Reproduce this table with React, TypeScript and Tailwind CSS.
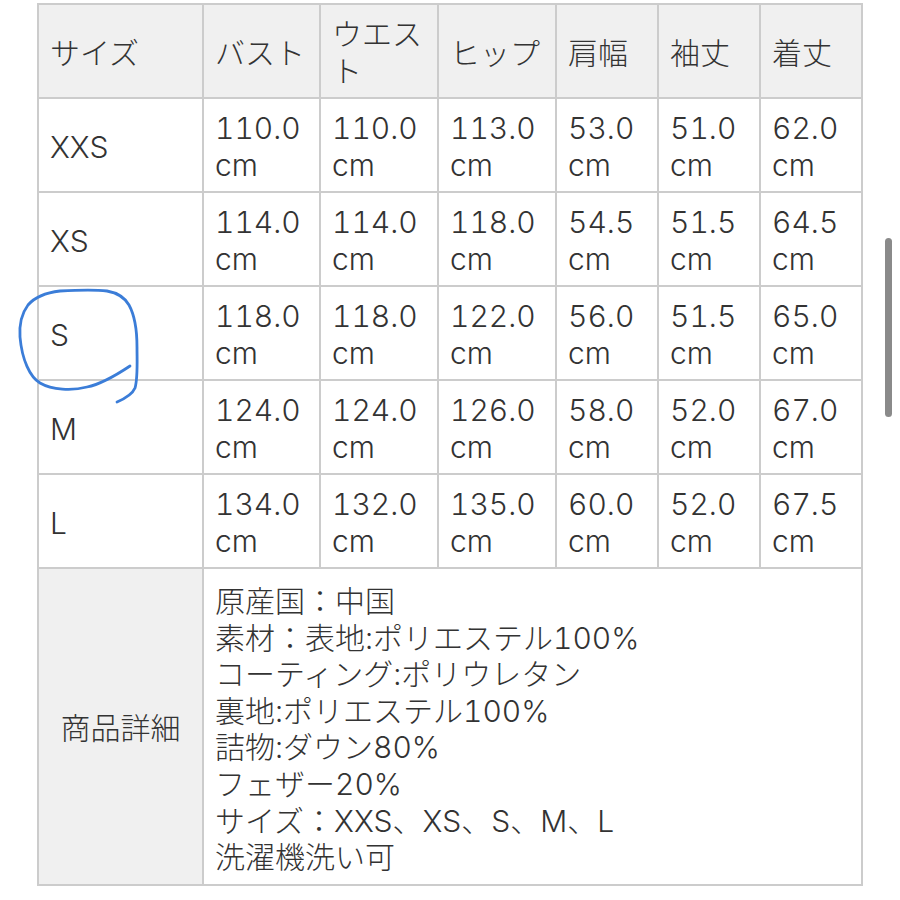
// Size chart table with product details, a hand-drawn circle over "S"

const headers = ["サイズ", "バスト", "ウエスト", "ヒップ", "肩幅", "袖丈", "着丈"];

const rows: [string, string[]][] = [
  ["XXS", ["110.0", "110.0", "113.0", "53.0", "51.0", "62.0"]],
  ["XS", ["114.0", "114.0", "118.0", "54.5", "51.5", "64.5"]],
  ["S", ["118.0", "118.0", "122.0", "56.0", "51.5", "65.0"]],
  ["M", ["124.0", "124.0", "126.0", "58.0", "52.0", "67.0"]],
  ["L", ["134.0", "132.0", "135.0", "60.0", "52.0", "67.5"]],
];

const details = [
  "原産国：中国",
  "素材：表地:ポリエステル100%",
  "コーティング:ポリウレタン",
  "裏地:ポリエステル100%",
  "詰物:ダウン80%",
  "フェザー20%",
  "サイズ：XXS、XS、S、M、L",
  "洗濯機洗い可",
];

const colWidths = ["w-[165px]", "w-[117px]", "w-[118px]", "w-[118px]", "w-[102px]", "w-[102px]", "w-[102px]"];

export default function App() {
  return (
    <div
      className="relative w-[900px] h-[900px] bg-white overflow-hidden text-[#333333] font-light tabular-nums"
      style={{ fontFamily: 'Inter, "Noto Sans CJK JP", sans-serif' }}
    >
      <table className="ml-[37px] mt-[3px] w-[826px] table-fixed border-collapse text-[30px] leading-[36.6px]">
        <colgroup>
          {colWidths.map((w, i) => (
            <col key={i} className={w} />
          ))}
        </colgroup>
        <thead>
          <tr className="h-[94px]">
            {headers.map((h) => (
              <th
                key={h}
                className="border-2 border-[#cccccc] bg-[#f0f0f0] px-[11px] pt-[4px] text-left font-light align-middle"
              >
                {h}
              </th>
            ))}
          </tr>
        </thead>
        <tbody>
          {rows.map(([size, vals]) => (
            <tr key={size} className="h-[94px]">
              <td className="border-2 border-[#cccccc] px-[11px] pt-[4px] align-middle">{size}</td>
              {vals.map((v, i) => (
                <td key={i} className="border-2 border-[#cccccc] px-[11px] pt-[4px] align-middle">
                  {v} cm
                </td>
              ))}
            </tr>
          ))}
          <tr>
            <td className="border-2 border-[#cccccc] bg-[#f0f0f0] px-0 pt-[4px] text-center whitespace-nowrap align-middle">
              商品詳細
            </td>
            <td colSpan={6} className="border-2 border-[#cccccc] px-[11px] pt-[14px] pb-[8px] align-middle">
              {details.map((d) => (
                <div key={d}>{d}</div>
              ))}
            </td>
          </tr>
        </tbody>
      </table>

      {/* hand-drawn marker circle */}
      <svg className="absolute left-0 top-0 pointer-events-none" width="900" height="900">
        <path
          d="M130 366 C118 374 102 384 87 387 C72 391 52 390 40 383 C30 377 22 360 20 337 C19 322 22 313 28 305 C34 298 43 293 60 291 C80 290 98 290 107 291 C118 293 125 298 129 305 C135 316 137 330 137 347 C137 362 138 378 135 388 C132 395 124 399 117 402"
          fill="none"
          stroke="#3b7dd8"
          strokeWidth="2.8"
          strokeLinecap="round"
          strokeLinejoin="round"
        />
      </svg>

      {/* scrollbar thumb */}
      <div className="absolute left-[885px] top-[238px] w-[7px] h-[179px] rounded-full bg-[#8a8a8a]" />
    </div>
  );
}
